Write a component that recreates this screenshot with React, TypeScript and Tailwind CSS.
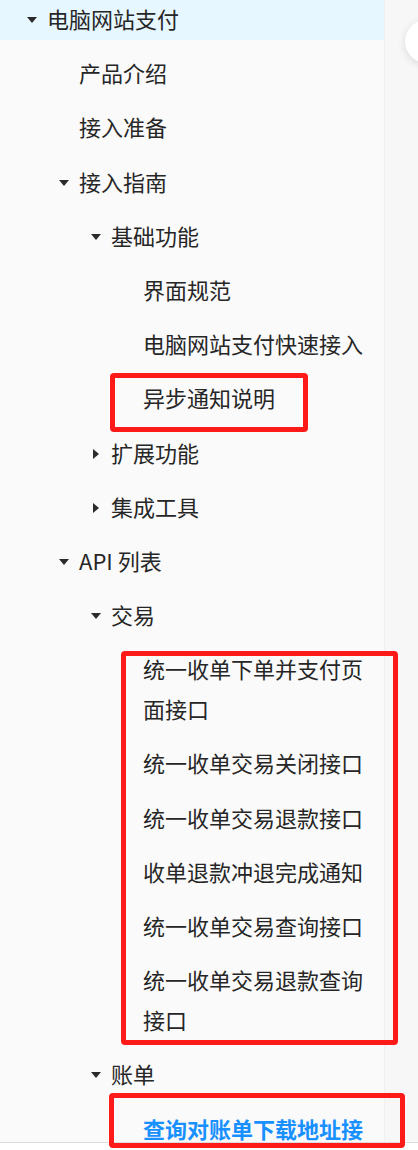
import React from "react";

type Item = {
  label: string;
  level: number;
  caret?: "down" | "right";
  active?: boolean;
  selected?: boolean;
};

const ITEMS: Item[] = [
  { label: "电脑网站支付", level: 0, caret: "down", active: true },
  { label: "产品介绍", level: 1 },
  { label: "接入准备", level: 1 },
  { label: "接入指南", level: 1, caret: "down" },
  { label: "基础功能", level: 2, caret: "down" },
  { label: "界面规范", level: 3 },
  { label: "电脑网站支付快速接入", level: 3 },
  { label: "异步通知说明", level: 3 },
  { label: "扩展功能", level: 2, caret: "right" },
  { label: "集成工具", level: 2, caret: "right" },
  { label: "API 列表", level: 1, caret: "down" },
  { label: "交易", level: 2, caret: "down" },
  { label: "统一收单下单并支付页面接口", level: 3 },
  { label: "统一收单交易关闭接口", level: 3 },
  { label: "统一收单交易退款接口", level: 3 },
  { label: "收单退款冲退完成通知", level: 3 },
  { label: "统一收单交易查询接口", level: 3 },
  { label: "统一收单交易退款查询接口", level: 3 },
  { label: "账单", level: 2, caret: "down" },
  { label: "查询对账单下载地址接口", level: 3, selected: true },
];

// 左側の余白（キャレット枠の左端）をレベルごとに
const PAD = ["pl-[25px]", "pl-[57px]", "pl-[89px]", "pl-[121px]"];

function Caret({ dir }: { dir: "down" | "right" }) {
  return (
    <svg width="10" height="10" viewBox="0 0 10 10" className="ml-[2px]">
      {dir === "down" ? (
        <polygon points="0,2 10,2 5,8" fill="#2b2b2b" />
      ) : (
        <polygon points="2,0 8,5 2,10" fill="#2b2b2b" />
      )}
    </svg>
  );
}

function MenuRow({ item }: { item: Item }) {
  return (
    <div
      className={`flex items-start pr-[16px] mb-[14.2px] ${PAD[item.level]} ${
        item.active ? "bg-[#e6f7ff]" : ""
      }`}
    >
      <div className="flex h-10 w-[22px] shrink-0 items-center">
        {item.caret && <Caret dir={item.caret} />}
      </div>
      <span
        className={`-mt-[2px] mb-[2px] text-[22px] leading-10 ${
          item.selected ? "font-bold text-[#1890ff]" : "text-[#262626]"
        }`}
      >
        {item.label}
      </span>
    </div>
  );
}

export default function App() {
  return (
    <div
      className="relative flex h-[1150px] w-[418px] flex-col overflow-hidden bg-[#f5f5f5]"
      style={{ fontFamily: '"Noto Sans CJK SC", "Noto Sans", sans-serif' }}
    >
      <div className="flex h-[1142px] shrink-0 overflow-hidden">
        <nav className="w-[384px] shrink-0 bg-[#fafafa]">
          {ITEMS.map((it) => (
            <MenuRow key={it.label} item={it} />
          ))}
        </nav>
        <div className="flex-1 border-l border-[#f0f0f0] bg-[#f7f7f7] pl-[20px] pt-[20px]">
          <div className="h-[43px] w-[43px] rounded-full bg-white shadow-[0_2px_8px_rgba(0,0,0,0.12)]" />
        </div>
      </div>
      <div className="flex-1 border-t border-[#dcdcdc] bg-white" />

      {/* 注釈の赤枠 */}
      <div className="pointer-events-none absolute left-[110px] top-[373px] h-[59px] w-[198px] rounded-[4px] border-[5px] border-[#ff1a1a]" />
      <div className="pointer-events-none absolute left-[121px] top-[651px] h-[394px] w-[277px] rounded-[4px] border-[5px] border-[#ff1a1a]" />
      <div className="pointer-events-none absolute left-[109px] top-[1093px] h-[55px] w-[296px] rounded-[4px] border-[5px] border-[#ff1a1a]" />
    </div>
  );
}
